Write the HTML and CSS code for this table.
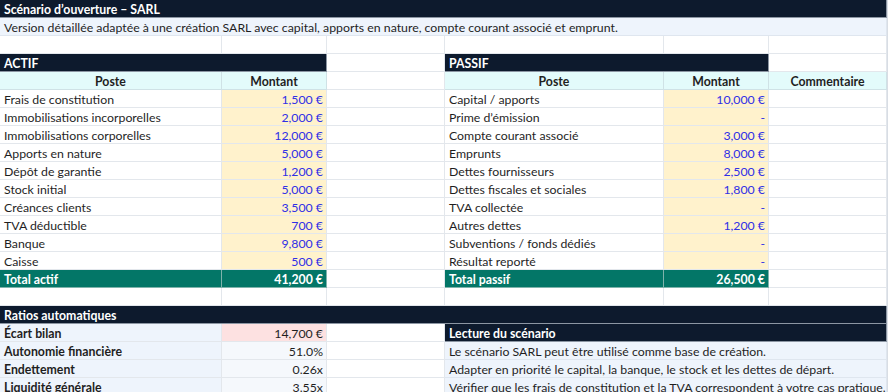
FILE: index.html
```html
<!DOCTYPE html>
<html lang="fr">
<head>
  <meta charset="UTF-8">
  <title>Scénario d'ouverture – SARL</title>
  <link rel="stylesheet" href="styles.css">
</head>
<body>
  <div class="sheet">
    <!-- row 1-3 -->
    <div class="cell dark span6">Scénario d’ouverture – SARL</div>
    <div class="cell note span6">Version détaillée adaptée à une création SARL avec capital, apports en nature, compte courant associé et emprunt.</div>
    <div class="cell"></div><div class="cell"></div><div class="cell"></div><div class="cell"></div><div class="cell"></div><div class="cell"></div>

    <!-- section titles -->
    <div class="cell dark span2">ACTIF</div>
    <div class="cell"></div>
    <div class="cell dark span2">PASSIF</div>
    <div class="cell"></div>

    <div class="cell head">Poste</div>
    <div class="cell head">Montant</div>
    <div class="cell"></div>
    <div class="cell head">Poste</div>
    <div class="cell head">Montant</div>
    <div class="cell head">Commentaire</div>

    <div class="cell">Frais de constitution</div><div class="cell amount">1,500 €</div><div class="cell"></div>
    <div class="cell">Capital / apports</div><div class="cell amount">10,000 €</div><div class="cell"></div>

    <div class="cell">Immobilisations incorporelles</div><div class="cell amount">2,000 €</div><div class="cell"></div>
    <div class="cell">Prime d’émission</div><div class="cell amount">-</div><div class="cell"></div>

    <div class="cell">Immobilisations corporelles</div><div class="cell amount">12,000 €</div><div class="cell"></div>
    <div class="cell">Compte courant associé</div><div class="cell amount">3,000 €</div><div class="cell"></div>

    <div class="cell">Apports en nature</div><div class="cell amount">5,000 €</div><div class="cell"></div>
    <div class="cell">Emprunts</div><div class="cell amount">8,000 €</div><div class="cell"></div>

    <div class="cell">Dépôt de garantie</div><div class="cell amount">1,200 €</div><div class="cell"></div>
    <div class="cell">Dettes fournisseurs</div><div class="cell amount">2,500 €</div><div class="cell"></div>

    <div class="cell">Stock initial</div><div class="cell amount">5,000 €</div><div class="cell"></div>
    <div class="cell">Dettes fiscales et sociales</div><div class="cell amount">1,800 €</div><div class="cell"></div>

    <div class="cell">Créances clients</div><div class="cell amount">3,500 €</div><div class="cell"></div>
    <div class="cell">TVA collectée</div><div class="cell amount">-</div><div class="cell"></div>

    <div class="cell">TVA déductible</div><div class="cell amount">700 €</div><div class="cell"></div>
    <div class="cell">Autres dettes</div><div class="cell amount">1,200 €</div><div class="cell"></div>

    <div class="cell">Banque</div><div class="cell amount">9,800 €</div><div class="cell"></div>
    <div class="cell">Subventions / fonds dédiés</div><div class="cell amount">-</div><div class="cell"></div>

    <div class="cell">Caisse</div><div class="cell amount">500 €</div><div class="cell"></div>
    <div class="cell">Résultat reporté</div><div class="cell amount">-</div><div class="cell"></div>

    <div class="cell total">Total actif</div><div class="cell total num">41,200 €</div><div class="cell"></div>
    <div class="cell total">Total passif</div><div class="cell total num">26,500 €</div><div class="cell"></div>

    <div class="cell"></div><div class="cell"></div><div class="cell"></div><div class="cell"></div><div class="cell"></div><div class="cell"></div>

    <!-- ratios -->
    <div class="cell dark span6">Ratios automatiques</div>

    <div class="cell label">Écart bilan</div><div class="cell num gap">14,700 €</div><div class="cell"></div>
    <div class="cell dark span3">Lecture du scénario</div>

    <div class="cell label">Autonomie financière</div><div class="cell num light">51.0%</div><div class="cell"></div>
    <div class="cell note span3">Le scénario SARL peut être utilisé comme base de création.</div>

    <div class="cell label">Endettement</div><div class="cell num light">0.26x</div><div class="cell"></div>
    <div class="cell note span3">Adapter en priorité le capital, la banque, le stock et les dettes de départ.</div>

    <div class="cell label">Liquidité générale</div><div class="cell num light">3.55x</div><div class="cell"></div>
    <div class="cell note span3">Vérifier que les frais de constitution et la TVA correspondent à votre cas pratique.</div>
  </div>
</body>
</html>
```

FILE: styles.css
```css
body {
  margin: 0;
  background: #fff;
  font-family: Lato, "Open Sans", sans-serif;
  font-size: 12.3px;
  color: #1f1f1f;
  overflow: hidden;
}

.sheet {
  display: grid;
  grid-template-columns: 222px 105px 118px 219px 105px 118px;
  grid-auto-rows: 18px;
  width: 887px;
  border-right: 1px solid #d8dde4;
}

.cell {
  box-sizing: border-box;
  border-right: 1px solid #e3e7ec;
  border-bottom: 1px solid #e3e7ec;
  padding: 1px 4px 0;
  line-height: 17px;
  white-space: nowrap;
  overflow: hidden;
}

.span2 { grid-column: span 2; }
.span3 { grid-column: span 3; }
.span6 { grid-column: span 6; }

.dark {
  background: #0d1a2d;
  color: #fff;
  font-weight: bold;
  border-color: #8c96a3;
}

.note {
  background: #eef4fc;
  border-color: #dfe6ef;
}

.head {
  background: #e3fbfb;
  font-weight: bold;
  text-align: center;
  border-color: #cfe2e6;
}

.amount {
  background: #fff2cc;
  color: #3030e6;
  text-align: right;
  padding-right: 3px;
}

.num {
  text-align: right;
  padding-right: 3px;
}

.total {
  background: #037667;
  color: #fff;
  font-weight: bold;
  border-color: #7fb3ab;
}

.label {
  background: #eef4fc;
  font-weight: bold;
}

.gap {
  background: #fde1e1;
}

.light {
  background: #f5f8fc;
}
```
